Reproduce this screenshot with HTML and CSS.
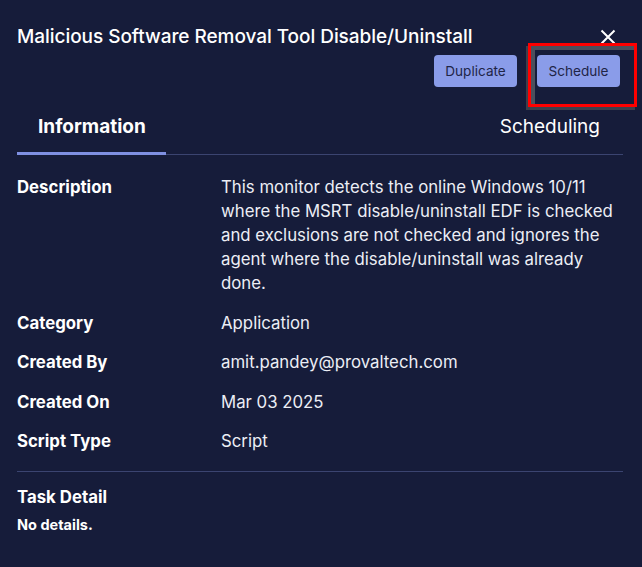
FILE: index.html
```html
<!DOCTYPE html>
<html>
<head>
<meta charset="utf-8">
<link rel="stylesheet" href="styles.css">
</head>
<body>
<div class="panel">
  <div class="head">
    <h1 class="title">Malicious Software Removal Tool Disable/Uninstall</h1>
    <button class="close" aria-label="Close">
      <svg width="16" height="16" viewBox="0 0 16 16"><path d="M1.5 1.5 L14.5 14.5 M14.5 1.5 L1.5 14.5" stroke="#ffffff" stroke-width="2" fill="none"/></svg>
    </button>
  </div>
  <div class="actions">
    <button class="btn">Duplicate</button>
    <span class="highlight-wrap">
      <button class="btn">Schedule</button>
      <span class="highlight"></span>
    </span>
  </div>
  <div class="tabs">
    <div class="tab active">Information</div>
    <div class="tab">Scheduling</div>
  </div>
  <div class="details">
    <div class="row">
      <div class="label">Description</div>
      <div class="value">This monitor detects the online Windows 10/11 where the MSRT disable/uninstall EDF is checked and exclusions are not checked and ignores the agent where the disable/uninstall was already done.</div>
    </div>
    <div class="row">
      <div class="label">Category</div>
      <div class="value">Application</div>
    </div>
    <div class="row">
      <div class="label">Created By</div>
      <div class="value">amit.pandey@provaltech.com</div>
    </div>
    <div class="row">
      <div class="label">Created On</div>
      <div class="value">Mar 03 2025</div>
    </div>
    <div class="row">
      <div class="label">Script Type</div>
      <div class="value">Script</div>
    </div>
  </div>
  <div class="task">
    <div class="task-title">Task Detail</div>
    <div class="task-body">No details.</div>
  </div>
</div>
</body>
</html>
```
FILE: styles.css
```css
html, body {
  margin: 0;
  padding: 0;
  background: #161c3a;
}
body {
  font-family: Inter, "Noto Sans", sans-serif;
  color: #ffffff;
  width: 642px;
  height: 567px;
  overflow: hidden;
}
.panel {
  padding: 26px 19px 0 17px;
}
.head {
  display: flex;
  justify-content: space-between;
  align-items: flex-start;
}
.title {
  margin: 0;
  font-size: 19px;
  font-weight: 500;
  line-height: 22px;
  letter-spacing: -0.05px;
}
.close {
  background: none;
  border: 0;
  padding: 0;
  margin: 3px 7px 0 0;
  width: 16px;
  height: 16px;
  display: flex;
}
.actions {
  display: flex;
  justify-content: flex-end;
  gap: 20px;
  margin-top: 7px;
  padding-right: 3px;
}
.btn {
  width: 83px;
  height: 32px;
  border: 0;
  border-radius: 4px;
  background: #8a9ce9;
  color: #1f2547;
  font-family: Inter, "Noto Sans", sans-serif;
  font-size: 13.6px;
  font-weight: 400;
  padding: 0;
}
.highlight-wrap {
  position: relative;
  display: flex;
}
.highlight {
  position: absolute;
  left: -9px;
  top: -12px;
  width: 103px;
  height: 58px;
  border: 3px solid #ff0000;
  box-shadow: inset 4px 4px 0 #4c4f5c, -2px 3px 0 #3d404c;
  pointer-events: none;
}
.tabs {
  display: flex;
  justify-content: space-between;
  margin-top: 17px;
  border-bottom: 1px solid #3b4470;
}
.tab {
  font-size: 19px;
  line-height: 22px;
  padding: 12px 23px 14px 21px;
  margin-bottom: -1px;
  border-bottom: 3px solid transparent;
}
.tab.active {
  font-weight: 700;
  border-bottom-color: #7f90e2;
  width: 149px;
  box-sizing: border-box;
}
.details {
  display: flex;
  flex-direction: column;
  gap: 15.5px;
  padding: 20px 0 18px;
  border-bottom: 1px solid #3b4470;
}
.row {
  display: flex;
  font-size: 16.8px;
  line-height: 24px;
}
.label {
  width: 204px;
  flex: none;
  font-weight: 700;
}
.value {
  color: #eceef5;
  width: 400px;
}
.task {
  padding-top: 13px;
}
.task-title {
  font-size: 16.8px;
  font-weight: 700;
  line-height: 24px;
}
.task-body {
  font-size: 14.5px;
  font-weight: 700;
  line-height: 20px;
  margin-top: 6px;
}
```
